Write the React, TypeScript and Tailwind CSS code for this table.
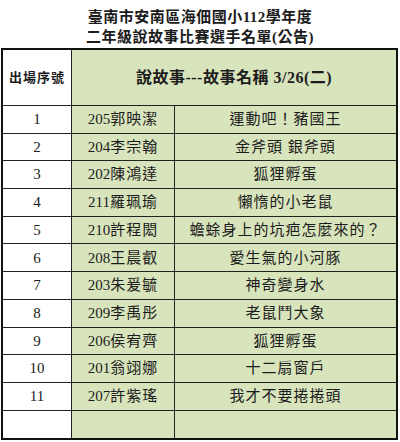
import React from 'react';

interface Entry {
  order: string;
  cls: string;
  name: string;
  story: string;
}

const entries: Entry[] = [
  { order: '1', cls: '205', name: '郭映潔', story: '運動吧！豬國王' },
  { order: '2', cls: '204', name: '李宗翰', story: '金斧頭 銀斧頭' },
  { order: '3', cls: '202', name: '陳鴻達', story: '狐狸孵蛋' },
  { order: '4', cls: '211', name: '羅珮瑜', story: '懶惰的小老鼠' },
  { order: '5', cls: '210', name: '許程閎', story: '蟾蜍身上的坑疤怎麼來的？' },
  { order: '6', cls: '208', name: '王晨叡', story: '愛生氣的小河豚' },
  { order: '7', cls: '203', name: '朱爰毓', story: '神奇變身水' },
  { order: '8', cls: '209', name: '李禹彤', story: '老鼠鬥大象' },
  { order: '9', cls: '206', name: '侯宥齊', story: '狐狸孵蛋' },
  { order: '10', cls: '201', name: '翁翊娜', story: '十二扇窗戶' },
  { order: '11', cls: '207', name: '許紫瑤', story: '我才不要捲捲頭' },
];

const font = { fontFamily: '"Liberation Serif", "Noto Sans CJK TC", serif' };

const App: React.FC = () => {
  return (
    <div className="w-[400px] h-[442px] bg-white text-[#1c1c1c] overflow-hidden" style={font}>
      {/* Title */}
      <div className="h-[48px] pt-[7px] text-center font-bold text-[15px] leading-[20px] tracking-[0.5px]">
        <div>臺南市安南區海佃國小112學年度</div>
        <div>二年級說故事比賽選手名單(公告)</div>
      </div>

      {/* Table */}
      <div className="ml-[1px] w-[397px] border-2 border-[#111]">
        {/* Header */}
        <div className="flex h-[56px] border-b border-[#222]">
          <div className="w-[69px] border-r border-[#222] flex items-center justify-center font-bold text-[13px] tracking-[1px] bg-white">
            出場序號
          </div>
          <div className="flex-1 bg-[#d8e4bc] flex items-center justify-center font-bold text-[16px] tracking-[0.5px]">
            說故事---故事名稱 3/26(二)
          </div>
        </div>

        {/* Rows */}
        {entries.map((e) => (
          <div key={e.order} className="flex h-[27.7px] border-b border-[#222] text-[15px]">
            <div className="w-[69px] border-r border-[#222] flex items-center justify-center bg-white">
              {e.order}
            </div>
            <div className="w-[103px] border-r border-[#222] flex items-center justify-center bg-[#d8e4bc]">
              <span>{e.cls}</span>
              <span className="tracking-[1px]">{e.name}</span>
            </div>
            <div className="flex-1 flex items-center justify-center bg-[#d8e4bc] tracking-[1px]">
              {e.story}
            </div>
          </div>
        ))}

        {/* Empty row */}
        <div className="flex h-[27px]">
          <div className="w-[69px] border-r border-[#222] bg-white" />
          <div className="w-[103px] border-r border-[#222] bg-[#d8e4bc]" />
          <div className="flex-1 bg-[#d8e4bc]" />
        </div>
      </div>
    </div>
  );
};

export default App;
